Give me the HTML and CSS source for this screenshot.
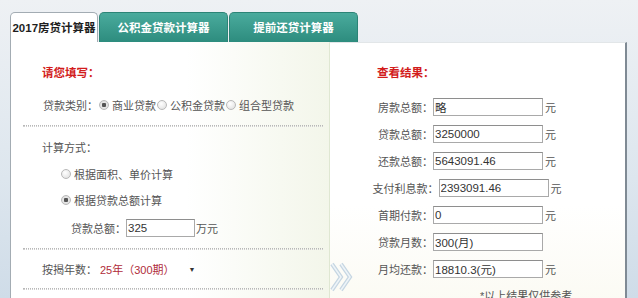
FILE: index.html
```html
<!DOCTYPE html>
<html lang="zh-CN">
<head>
    <meta charset="UTF-8">
    <meta name="viewport" content="width=device-width, initial-scale=1.0">
    <title>房贷计算器</title>
    <link rel="stylesheet" href="styles.css">
</head>
<body>
    <div class="calc">
        <div class="tabs">
            <div class="tab active">2017房贷计算器</div>
            <div class="tab">公积金贷款计算器</div>
            <div class="tab">提前还贷计算器</div>
        </div>

        <div class="panel">
            <!-- 左边：填写 -->
            <div class="form">
                <div class="title">请您填写：</div>
                <div class="row kind">
                    <span class="label">贷款类别：</span>
                    <label><input type="radio" name="kind" checked>商业贷款</label>
                    <label><input type="radio" name="kind">公积金贷款</label>
                    <label><input type="radio" name="kind">组合型贷款</label>
                </div>
                <div class="dots"></div>

                <div class="row plain">计算方式：</div>
                <div class="row way"><label><input type="radio" name="way">根据面积、单价计算</label></div>
                <div class="row way second"><label><input type="radio" name="way" checked>根据贷款总额计算</label></div>
                <div class="row amount">
                    <span class="label">贷款总额：</span>
                    <input type="text" class="box small" value="325">
                    <span>万元</span>
                </div>
                <div class="dots"></div>

                <div class="row years">
                    <span class="label">按揭年数：</span>
                    <span class="pick">25年（300期）</span>
                    <span class="caret">▼</span>
                </div>
                <div class="dots"></div>
            </div>

            <!-- 右边：结果 -->
            <div class="result">
                <div class="title">查看结果：</div>
                <div class="line first"><span class="label">房款总额：</span><input type="text" class="box" value="略"><span class="unit">元</span></div>
                <div class="line"><span class="label">贷款总额：</span><input type="text" class="box" value="3250000"><span class="unit">元</span></div>
                <div class="line"><span class="label">还款总额：</span><input type="text" class="box" value="5643091.46"><span class="unit">元</span></div>
                <div class="line"><span class="label">支付利息款：</span><input type="text" class="box" value="2393091.46"><span class="unit">元</span></div>
                <div class="line"><span class="label">首期付款：</span><input type="text" class="box" value="0"><span class="unit">元</span></div>
                <div class="line"><span class="label">贷款月数：</span><input type="text" class="box" value="300(月)"><span class="unit"></span></div>
                <div class="line"><span class="label">月均还款：</span><input type="text" class="box" value="18810.3(元)"><span class="unit">元</span></div>
                <div class="note">*以上结果仅供参考</div>
            </div>

            <svg class="arrow" width="24" height="30" viewBox="0 0 24 30">
                <path d="M2 2 L11 15 L2 28" />
                <path d="M11 2 L20 15 L11 28" />
                <path class="inner" d="M2 2 L11 15 L2 28" />
                <path class="inner" d="M11 2 L20 15 L11 28" />
            </svg>
        </div>
    </div>
</body>
</html>
```

FILE: styles.css
```css
body {
    margin: 0;
    font-family: "Liberation Sans", "Noto Sans CJK SC", sans-serif;
    font-size: 11px;
    color: #555;
    background: linear-gradient(#eef1f4, #dde6ee 60%, #cfdce8);
    height: 298px;
    overflow: hidden;
}

.calc {
    padding: 12px 0 0 10px;
    width: 617px;
}

/* 頁籤 */
.tabs {
    display: flex;
    gap: 1px;
    height: 30px;
}

.tab {
    width: 129px;
    box-sizing: border-box;
    border: 1px solid #2c8476;
    border-bottom: none;
    border-radius: 5px 5px 0 0;
    background: linear-gradient(#4aab9d, #2d8c7e);
    color: #fff;
    font-size: 11.5px;
    font-weight: bold;
    line-height: 30px;
    text-align: center;
}

.tab.active {
    width: 88px;
    border-color: #a3acb3;
    background: #fff;
    color: #1e1e1e;
}

.panel {
    position: relative;
    display: flex;
    height: 270px;
}

/* 左邊填寫區 */
.form {
    width: 318px;
    border-left: 1px solid #a3acb3;
    padding: 0 6px 0 12px;
    box-sizing: content-box;
    width: 300px;
    background: linear-gradient(to right, #fff 55%, #f3f6ea);
}

.title {
    margin-top: 21px;
    line-height: 20px;
    padding-left: 19px;
    color: #d21c1c;
    font-size: 11.5px;
    font-weight: bold;
}

.row {
    display: flex;
    align-items: center;
    height: 20px;
    padding-left: 19px;
}

.kind {
    margin-top: 12px;
    padding-left: 20px;
}

.kind label {
    display: flex;
    align-items: center;
}

.kind input {
    margin: 0 3px 0 1px;
}

.dots {
    margin-top: 10px;
    height: 0;
    border-top: 1px dotted #b8b8b8;
    border-bottom: 1px dotted #cfcfcf;
}

.plain {
    margin-top: 10px;
}

.way {
    margin-top: 7px;
    padding-left: 38px;
}

.way.second {
    margin-top: 6px;
}

.way label {
    display: flex;
    align-items: center;
}

.way input {
    margin: 0 3px 0 0;
}

.amount {
    margin-top: 8px;
    padding-left: 48px;
}

.years {
    margin-top: 9px;
}

.pick {
    margin-left: 3px;
    color: #b02c3a;
}

.caret {
    margin-left: 14px;
    font-size: 7px;
    color: #333;
}

.years + .dots {
    margin-top: 9px;
}

/* 單選框 */
input[type="radio"] {
    appearance: none;
    width: 10px;
    height: 10px;
    border: 1px solid #b9b9b9;
    border-radius: 50%;
    background: radial-gradient(circle at 40% 35%, #fff, #dcdcdc);
    box-sizing: border-box;
}

input[type="radio"]:checked {
    background: radial-gradient(circle, #555 0 2px, #e6e6e6 2.5px, #d8d8d8);
}

.box {
    width: 110px;
    height: 18px;
    box-sizing: border-box;
    margin: 0;
    padding: 0 1px;
    border: 1px solid #a9a9a9;
    border-top-color: #8e8e8e;
    background: #fff;
    font-family: "Liberation Sans", "Noto Sans CJK SC", sans-serif;
    font-size: 11.5px;
    color: #333;
}

.box.small {
    width: 69px;
    margin-right: 1px;
}

/* 右邊結果區 */
.result {
    flex: 1;
    border-top: 1px solid #e2e6e8;
    border-left: 1px solid #dfe7d2;
    border-right: 2px solid #7f8a94;
    background: linear-gradient(#fff 60%, #fbfaf2);
}

.result .title {
    margin-top: 20px;
    padding-left: 47px;
}

.line {
    display: flex;
    justify-content: center;
    align-items: center;
    height: 18px;
    margin-top: 9px;
    padding-right: 20px;
}

.line.first {
    margin-top: 15px;
}

.unit {
    width: 12px;
    margin-left: 2px;
}

.note {
    margin-top: 9px;
    padding-left: 150px;
    line-height: 18px;
}

.arrow {
    position: absolute;
    left: 320px;
    top: 220px;
    fill: none;
    stroke: #c6d6e2;
    stroke-width: 4;
}

.arrow .inner {
    stroke: #eef4f8;
    stroke-width: 1.5;
}
```
